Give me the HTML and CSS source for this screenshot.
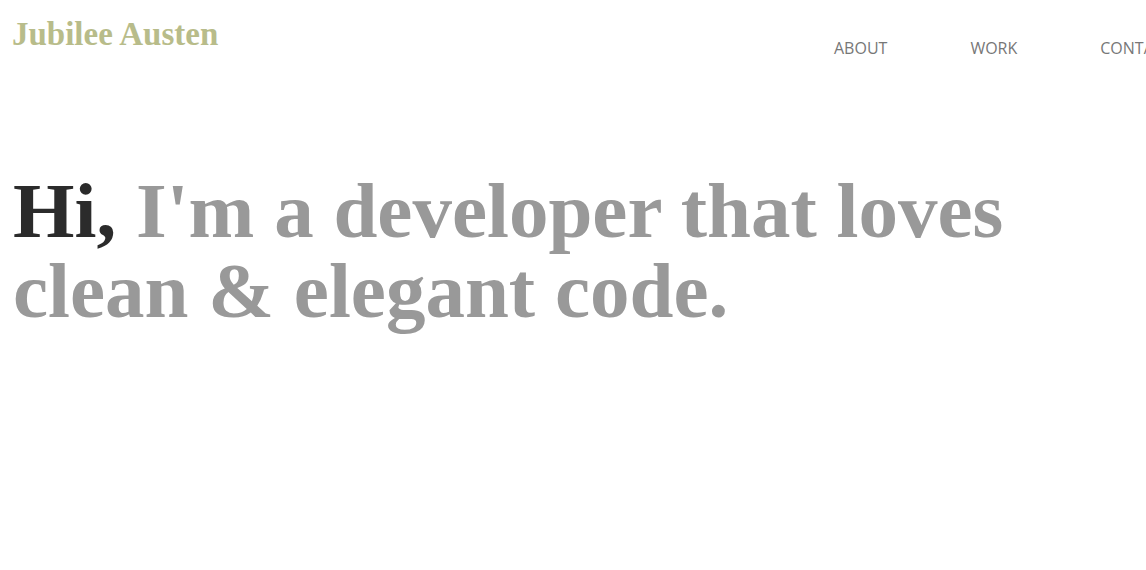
FILE: index.html
```html
<!DOCTYPE html>
<html lang="en">
<head>
<meta charset="utf-8">
<title>Jubilee Austen</title>
<link rel="stylesheet" href="styles.css">
</head>
<body>
<header class="site-header">
  <div class="brand">Jubilee Austen</div>
  <nav class="main-nav">
    <a class="nav-link" href="#about">ABOUT</a>
    <a class="nav-link" href="#work">WORK</a>
    <a class="nav-link" href="#contact">CONTACT</a>
  </nav>
</header>
<main class="hero">
  <h1 class="hero-title"><span class="hi">Hi,</span> I'm a developer that loves<br>clean &amp; elegant code.</h1>
</main>
</body>
</html>
```
FILE: styles.css
```css
html, body {
  margin: 0;
  padding: 0;
  overflow: hidden;
  background: #ffffff;
}

body {
  width: 1146px;
  height: 570px;
}

.site-header {
  display: flex;
  align-items: flex-start;
}

.brand {
  flex: 0 0 822px;
  padding: 16px 0 0 12px;
  font-family: "Liberation Serif", "Times New Roman", serif;
  font-weight: 700;
  font-size: 33px;
  line-height: 36px;
  color: #b8bc8a;
}

.main-nav {
  display: flex;
  gap: 83px;
  flex: none;
  padding-top: 37px;
  white-space: nowrap;
}

.nav-link {
  font-family: "Open Sans", "Noto Sans", sans-serif;
  font-size: 16px;
  line-height: 22px;
  color: #777777;
  text-decoration: none;
}

.hero {
  padding: 0 0 0 13px;
}

.hero-title {
  margin: 0;
  padding-top: 112px;
  font-family: "Liberation Serif", "Times New Roman", serif;
  font-weight: 700;
  font-size: 79px;
  line-height: 80px;
  color: #999999;
  white-space: nowrap;
}

.hi {
  color: #2b2b2b;
}
```
